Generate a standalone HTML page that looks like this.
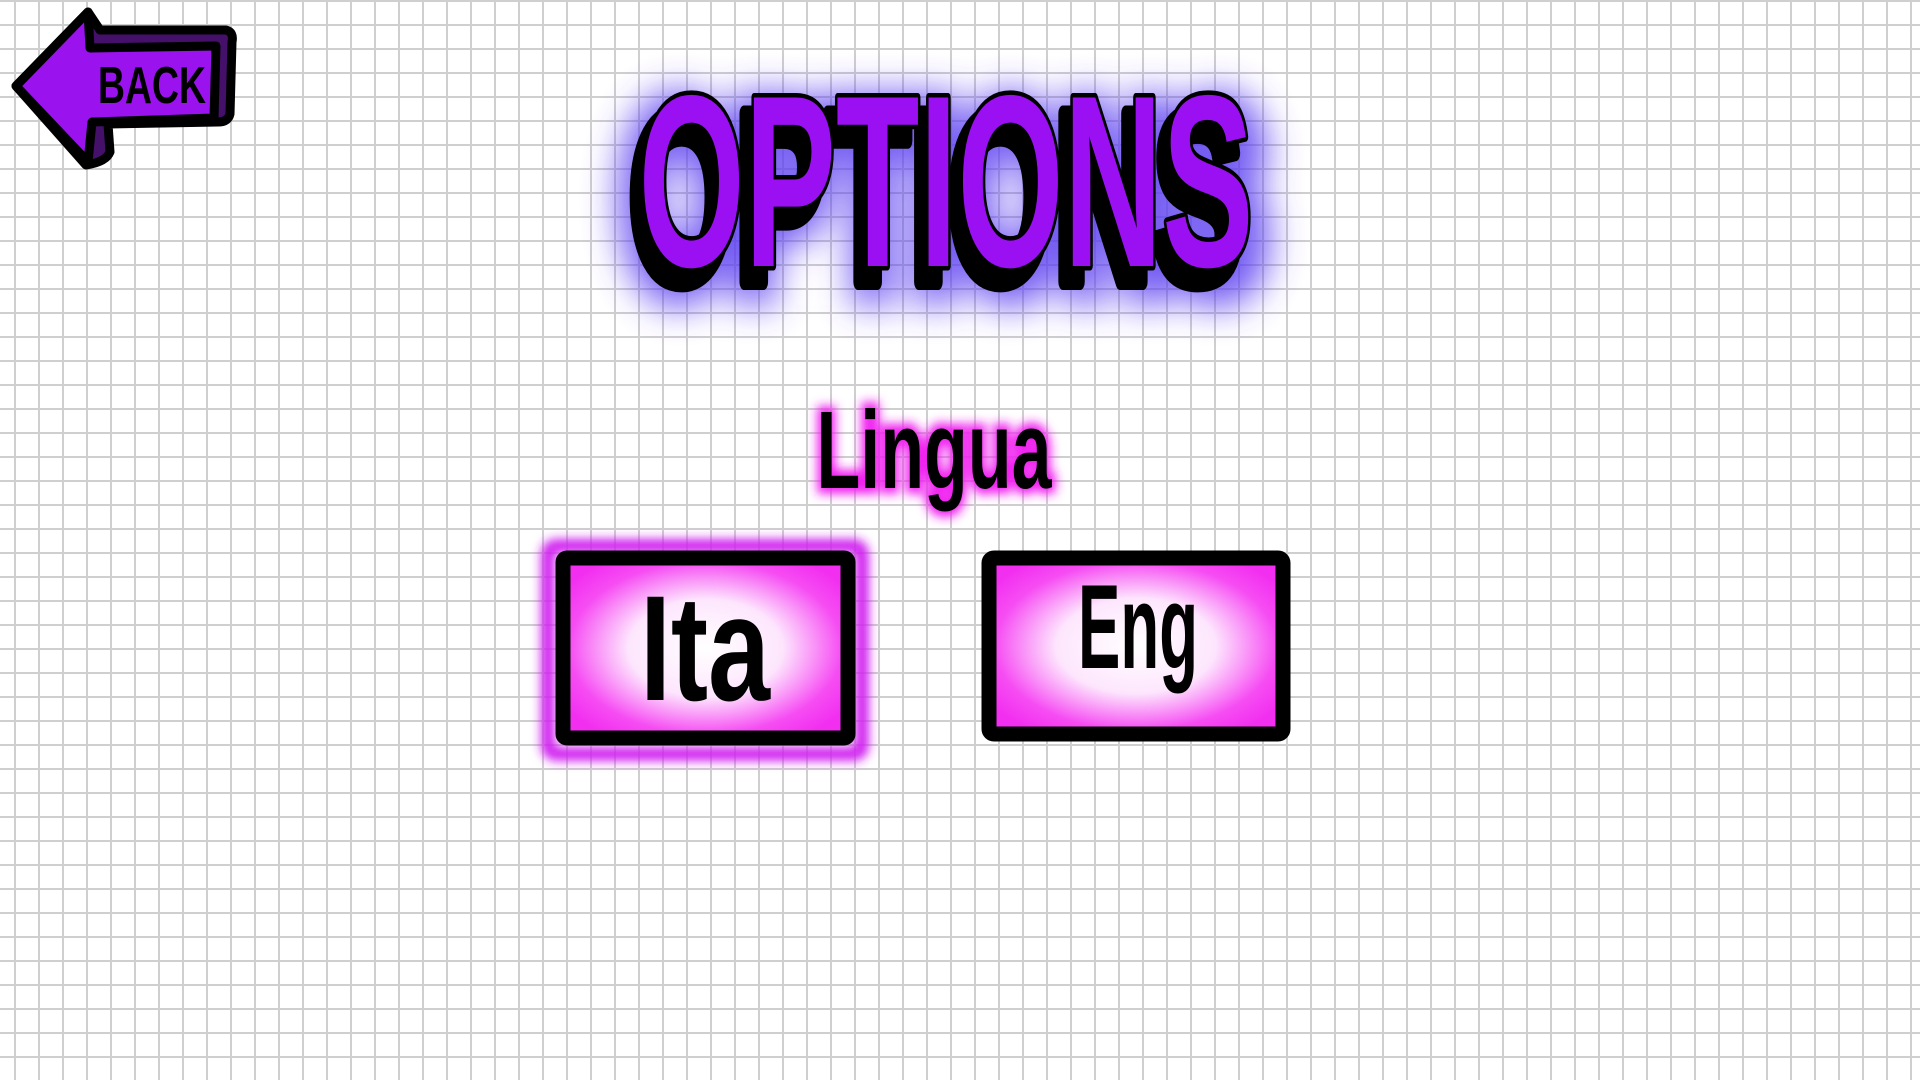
<!DOCTYPE html>
<html><head><meta charset="utf-8"><style>
html,body{margin:0;padding:0;width:1920px;height:1080px;overflow:hidden}
body{background-color:#fff;
background-image:linear-gradient(to right,#cfcfcf 0,#cfcfcf 2px,transparent 2px),linear-gradient(to bottom,#cfcfcf 0,#cfcfcf 2px,transparent 2px);
background-size:24px 24px;background-position:14px 0px,0 0px;position:relative}
svg{position:absolute;left:0;top:0}
</style></head><body>
<svg width="1920" height="1080" viewBox="0 0 1920 1080">
<defs>
<filter id="blue" x="-30%" y="-30%" width="160%" height="160%"><feGaussianBlur stdDeviation="18"/></filter>
<filter id="pink" x="-30%" y="-30%" width="160%" height="160%"><feGaussianBlur stdDeviation="5"/></filter>
<radialGradient id="btn" cx="50%" cy="50%" r="60%">
<stop offset="0" stop-color="#fff"/><stop offset="0.45" stop-color="#fde6fd"/><stop offset="0.8" stop-color="#f64cf3"/><stop offset="1" stop-color="#f22ef0"/></radialGradient>
</defs>
<g stroke="#000" stroke-width="9" stroke-linejoin="round">
<path d="M88 12 L100 30 L226 30 Q234 32 232 42 L230 114 Q228 122 218 122 L108 124 L110 152 Q106 162 86 165 L16 86 Z" fill="#45106a"/>
<path d="M88 12 L90 48 L216 46 L214 118 L92 122 L88 162 L16 86 Z" fill="#9a12ee"/>
</g>
<text x="152" y="103" text-anchor="middle" font-family="Liberation Sans Narrow, Liberation Sans, sans-serif" font-weight="bold" font-size="52" fill="#000" textLength="108" lengthAdjust="spacingAndGlyphs">BACK</text>
<text x="944" y="285" text-anchor="middle" font-family="Liberation Sans Narrow, Liberation Sans, sans-serif" font-weight="bold" font-size="250" fill="#5a3cf0" stroke="#5a3cf0" stroke-width="40" opacity="0.85" filter="url(#blue)" textLength="640" lengthAdjust="spacingAndGlyphs">OPTIONS</text>
<text x="936" y="282" text-anchor="middle" font-family="Liberation Sans Narrow, Liberation Sans, sans-serif" font-weight="bold" font-size="245" fill="#000" stroke="#000" stroke-width="16" stroke-linejoin="round" textLength="615" lengthAdjust="spacingAndGlyphs">OPTIONS</text>
<text x="946" y="266" text-anchor="middle" font-family="Liberation Sans Narrow, Liberation Sans, sans-serif" font-weight="bold" font-size="245" fill="#9b10f2" stroke="#000" stroke-width="9" stroke-linejoin="round" paint-order="stroke" textLength="615" lengthAdjust="spacingAndGlyphs">OPTIONS</text>
<text x="934" y="488" text-anchor="middle" font-family="Liberation Sans Narrow, Liberation Sans, sans-serif" font-weight="bold" font-size="110" fill="#f020f0" stroke="#f020f0" stroke-width="12" filter="url(#pink)" textLength="235" lengthAdjust="spacingAndGlyphs">Lingua</text>
<text x="934" y="488" text-anchor="middle" font-family="Liberation Sans Narrow, Liberation Sans, sans-serif" font-weight="bold" font-size="110" fill="#000" textLength="235" lengthAdjust="spacingAndGlyphs">Lingua</text>
<rect x="548" y="546" width="314" height="208" rx="8" fill="none" stroke="#d020f0" stroke-width="14" filter="url(#pink)"/>
<rect x="563" y="558" width="285" height="180" rx="4" fill="url(#btn)" stroke="#000" stroke-width="15"/>
<text x="705" y="700" text-anchor="middle" font-family="Liberation Sans Narrow, Liberation Sans, sans-serif" font-weight="bold" font-size="150" fill="#000" textLength="130" lengthAdjust="spacingAndGlyphs">Ita</text>
<rect x="989" y="558" width="294" height="176" rx="5" fill="url(#btn)" stroke="#000" stroke-width="15"/>
<text x="1138" y="668" text-anchor="middle" font-family="Liberation Sans Narrow, Liberation Sans, sans-serif" font-weight="bold" font-size="120" fill="#000" textLength="120" lengthAdjust="spacingAndGlyphs">Eng</text>
</svg>
</body></html>
